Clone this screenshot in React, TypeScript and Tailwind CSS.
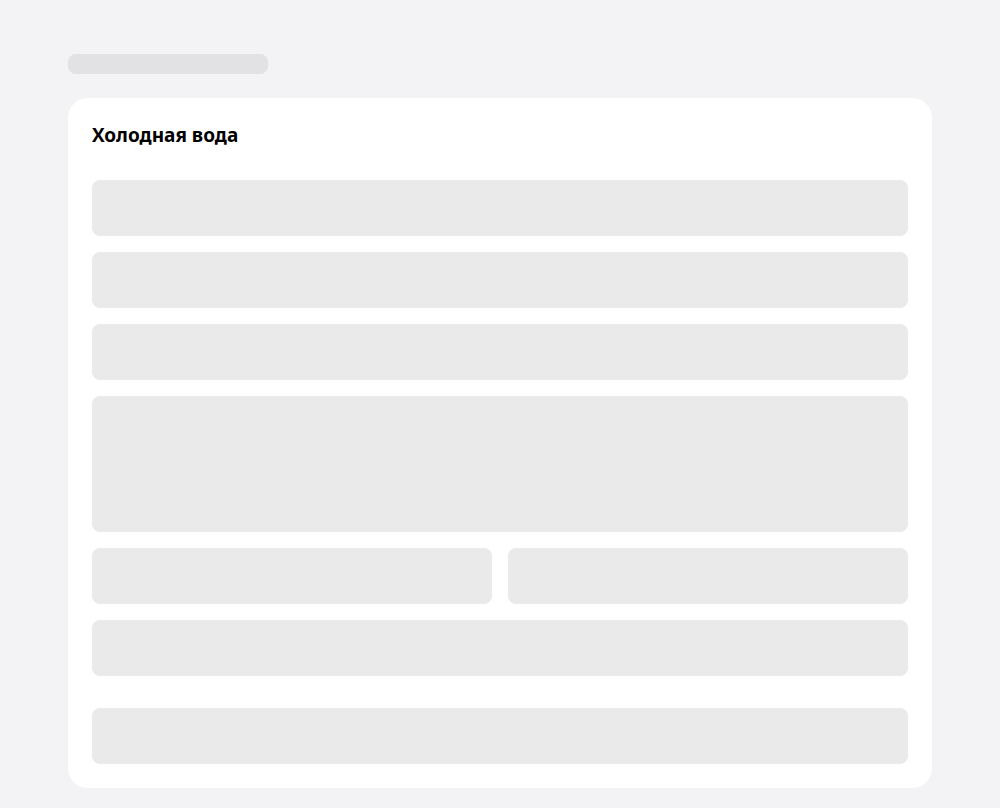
export default function App() {
    return (
        <main className="min-h-screen bg-[#f3f3f5] px-[68px] pt-[54px] pb-5 font-['Noto_Sans',sans-serif]">

            <div className="h-5 w-[200px] rounded-lg bg-[#e2e2e5]" />

            <section className="mt-6 rounded-[20px] bg-white p-6">

                <h1 className="-mt-[1px] h-7 text-[19px] leading-7 font-bold text-black">
                    Холодная вода
                </h1>

                <div className="mt-[31px] flex flex-col gap-4">
                    <div className="h-14 rounded-lg bg-[#eaeaea]" />
                    <div className="h-14 rounded-lg bg-[#eaeaea]" />
                    <div className="h-14 rounded-lg bg-[#eaeaea]" />
                    <div className="h-[136px] rounded-lg bg-[#eaeaea]" />
                    <div className="grid grid-cols-2 gap-4">
                        <div className="h-14 rounded-lg bg-[#eaeaea]" />
                        <div className="h-14 rounded-lg bg-[#eaeaea]" />
                    </div>
                    <div className="h-14 rounded-lg bg-[#eaeaea]" />
                </div>

                <div className="mt-8 h-14 rounded-lg bg-[#eaeaea]" />

            </section>

        </main>
    );
}
